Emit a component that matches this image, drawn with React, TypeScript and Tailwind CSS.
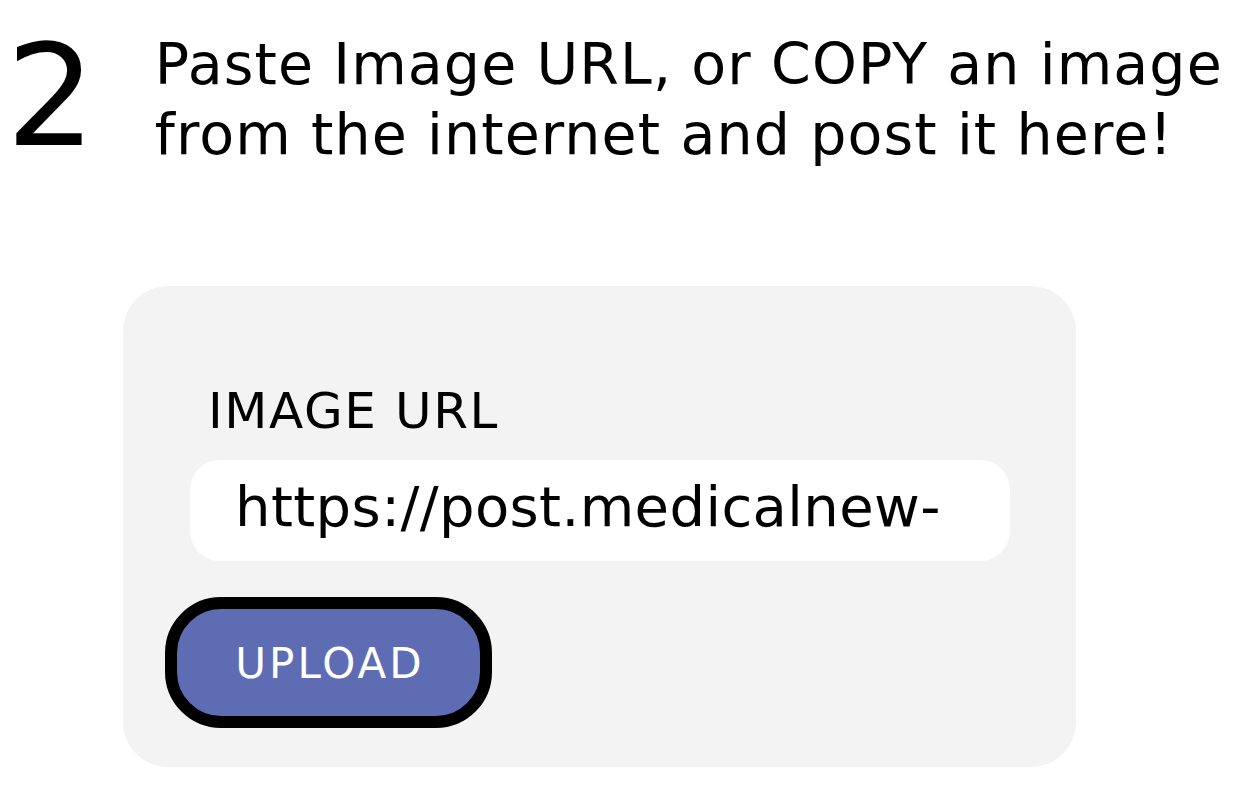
import React from 'react';

export default function App() {
  return (
    <div className="min-h-screen bg-white text-black font-['DejaVu_Sans',sans-serif]">
      {/* Step heading */}
      <div className="flex items-start pt-[26px] pl-[6px]">
        <div className="text-[141px] leading-none">2</div>
        <h1 className="ml-[59px] mt-[3px] text-[57px] leading-[70px] tracking-[1.1px] font-normal whitespace-nowrap">
          Paste Image URL, or COPY an image
          <br />
          from the internet and post it here!
        </h1>
      </div>

      {/* Upload card */}
      <div className="mt-[117px] ml-[123px] w-[953px] h-[481px] rounded-[45px] bg-[#f3f3f3] pt-[100px] flex flex-col items-start">
        <label className="ml-[85px] text-[50px] leading-none tracking-[1.6px]">IMAGE URL</label>
        <div className="mt-[24px] ml-[67px] w-[820px] h-[101px] rounded-[30px] bg-white pl-[45px] pt-[19px] text-[56px] leading-none tracking-[0.4px] whitespace-nowrap overflow-hidden">
          https://post.medicalnew-
        </div>
        <button className="mt-[36px] ml-[42px] w-[327px] h-[131px] border-[12px] border-black rounded-[56px] bg-[#5e6cb3] text-white text-[42px] leading-none tracking-[3px] pl-[3px] pt-[3px] flex items-center justify-center">
          UPLOAD
        </button>
      </div>
    </div>
  );
}
